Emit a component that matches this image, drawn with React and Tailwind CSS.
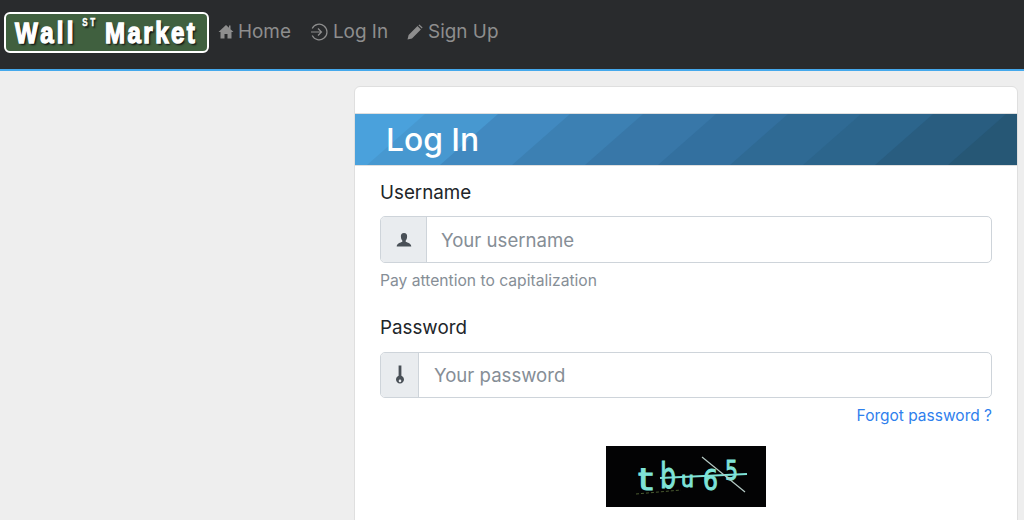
import React from 'react';

const stripeEdges = [12, 85, 157, 230, 303, 375, 448, 520, 593, 666];
const stripeColors = ['#4aa1dc', '#4798d0', '#4189c0', '#3c80b3', '#3877a8', '#33709f', '#2f6a94', '#2c658c', '#295d80', '#265775', '#245270'];

const HeaderStripes = () => (
  <svg className="absolute inset-0 h-full w-full" viewBox="0 0 662 51" preserveAspectRatio="none">
    {stripeColors.map((color, i) => {
      const left = i === 0 ? -100 : stripeEdges[i - 1];
      return <polygon key={color} fill={color} points={`${left},51 800,51 800,0 ${left + 58},0`} />;
    })}
  </svg>
);

const HomeIcon = () => (
  <svg width="16" height="15" viewBox="0 0 16 15" fill="currentColor">
    <path d="M8 1 L0.5 8 L2.5 8 L2.5 14.5 L6.5 14.5 L6.5 10 L9.5 10 L9.5 14.5 L13.5 14.5 L13.5 8 L15.5 8 L12.5 5.2 L12.5 1.5 L11 1.5 L11 3.8 Z" />
  </svg>
);

const LoginIcon = () => (
  <svg width="18" height="18" viewBox="0 0 18 18" fill="none" stroke="currentColor" strokeWidth="1.2">
    <path d="M2.2 5.5 A7.8 7.8 0 1 1 2.2 12.5" />
    <path d="M1 9 H11.5 M8 5.5 L11.5 9 L8 12.5" />
  </svg>
);

const PencilIcon = () => (
  <svg width="16" height="16" viewBox="0 0 16 16" fill="currentColor">
    <path d="M0.5 15.5 L1.6 11 L10.5 2.1 L13.9 5.5 L5 14.4 Z M11.4 1.2 L12.4 0.4 L15.6 3.6 L14.8 4.6 Z" />
  </svg>
);

const UserIcon = () => (
  <svg width="16" height="16" viewBox="0 0 16 15" fill="currentColor">
    <path d="M8 0.5 C10.3 0.5 11.3 2.2 11.1 4.4 C11 6.2 10.2 7.4 9.7 8 L9.7 9.3 C11.5 10.3 15 10.6 15.3 13.9 L0.7 13.9 C1 10.6 4.5 10.3 6.3 9.3 L6.3 8 C5.8 7.4 5 6.2 4.9 4.4 C4.7 2.2 5.7 0.5 8 0.5 Z" />
  </svg>
);

const KeyIcon = () => (
  <svg width="10" height="20" viewBox="0 0 10 20" fill="currentColor">
    <path fillRule="evenodd" d="M3.6 0.5 H6.4 V10.7 C8 11.4 9 12.8 9 14.6 C9 16.9 7.2 18.6 5 18.6 C2.8 18.6 1 16.9 1 14.6 C1 12.8 2 11.4 3.6 10.7 Z M5 14.6 A1.3 1.3 0 1 0 5 17.2 A1.3 1.3 0 1 0 5 14.6 Z" />
  </svg>
);

const Captcha = () => (
  <svg className="block" width="160" height="61" viewBox="0 0 160 61">
    <rect width="160" height="61" fill="#030304" />
    <g fill="#7fe3d8" stroke="#7fe3d8" strokeWidth="1" fontFamily="'DejaVu Sans', sans-serif">
      <text x="32" y="44" fontSize="31" textLength="15" lengthAdjust="spacingAndGlyphs">t</text>
      <text x="54" y="42" fontSize="36" textLength="16" lengthAdjust="spacingAndGlyphs">b</text>
      <text x="75" y="41" fontSize="22" textLength="13" lengthAdjust="spacingAndGlyphs">u</text>
      <text x="97" y="44" fontSize="29" textLength="15" lengthAdjust="spacingAndGlyphs">6</text>
      <text x="119" y="34" fontSize="27" textLength="13" lengthAdjust="spacingAndGlyphs">5</text>
    </g>
    <path d="M54 32 L141 28" stroke="#7fe3d8" strokeWidth="2.2" />
    <path d="M96 11 L139 46" stroke="#b5c9c4" strokeWidth="1.2" />
    <path d="M30 48 L75 44" stroke="#4a5a30" strokeWidth="1" strokeDasharray="3 2" />
  </svg>
);

const NavItem = ({ icon, label, gap }) => (
  <a className={`mb-[1px] flex items-center text-[18.9px] text-[#8e8e8e] ${gap}`}>
    {icon}
    <span>{label}</span>
  </a>
);

export default function App() {
  return (
    <div className="h-[520px] overflow-hidden bg-[#eeeeee] font-['Inter',sans-serif]">
      <nav className="flex h-[71px] items-center border-b-2 border-b-[#45a9ec] bg-[#292b2d] pb-[4px] pl-[4px]">
        <div className="flex h-[41px] w-[205px] items-center justify-center rounded-[6px] border-2 border-white bg-[#40603f]">
          <span className="scale-x-[0.805] whitespace-nowrap font-['Liberation_Sans',sans-serif] text-[30px] font-bold leading-none tracking-[3px] text-white [-webkit-text-stroke:1.4px_white] [text-shadow:2px_2px_2px_#111]">
            <span className="tracking-[4px]">Wall</span>
            <sup className="ml-[7px] mr-[-2px] align-[12px] text-[10px] leading-none tracking-[3px] [-webkit-text-stroke:0.4px_white]">ST</sup> Market
          </span>
        </div>
        <div className="ml-[9px] flex items-center gap-[19px]">
          <NavItem icon={<HomeIcon />} label="Home" gap="gap-[4px]" />
          <NavItem icon={<LoginIcon />} label="Log In" gap="gap-[5px]" />
          <NavItem icon={<PencilIcon />} label="Sign Up" gap="gap-[5px]" />
        </div>
      </nav>
      <main className="flex pt-[15px]">
        <div className="w-[354px] shrink-0" />
        <section className="h-[600px] w-[664px] shrink-0 rounded-[6px] border border-[#dfdfdf] bg-white pt-[26px]">
          <div className="relative h-[53px] overflow-hidden border-y border-[#dfdfdf]">
            <HeaderStripes />
            <h1 className="relative pl-[31px] text-[31.8px] font-medium leading-[52px] text-white">Log In</h1>
          </div>
          <form className="px-[25px] pt-[14px]">
            <label className="block text-[18.8px] leading-[26px] text-[#212529]">Username</label>
            <div className="mt-[10px] flex h-[47px] overflow-hidden rounded-[5px] border border-[#ced4da]">
              <div className="flex w-[46px] items-center justify-center border-r border-[#ced4da] bg-[#e9ecef] text-[#495057]">
                <UserIcon />
              </div>
              <div className="flex flex-1 items-center pl-[14px] pt-[2px] text-[18.6px] text-[#868e96]">Your username</div>
            </div>
            <p className="mt-[7px] text-[15.65px] leading-[22px] text-[#868e96]">Pay attention to capitalization</p>
            <label className="mt-[23px] block text-[18.8px] leading-[26px] text-[#212529]">Password</label>
            <div className="mt-[11px] flex h-[46px] overflow-hidden rounded-[5px] border border-[#ced4da]">
              <div className="flex w-[38px] items-center justify-center border-r border-[#ced4da] bg-[#e9ecef] text-[#495057]">
                <KeyIcon />
              </div>
              <div className="flex flex-1 items-center pl-[15px] pt-[1px] text-[18.6px] text-[#868e96]">Your password</div>
            </div>
            <div className="mt-[7px] text-right text-[15.5px] leading-[22px] text-[#2f80ed]">Forgot password ?</div>
            <div className="mt-[19px] flex justify-center">
              <Captcha />
            </div>
          </form>
        </section>
      </main>
    </div>
  );
}
